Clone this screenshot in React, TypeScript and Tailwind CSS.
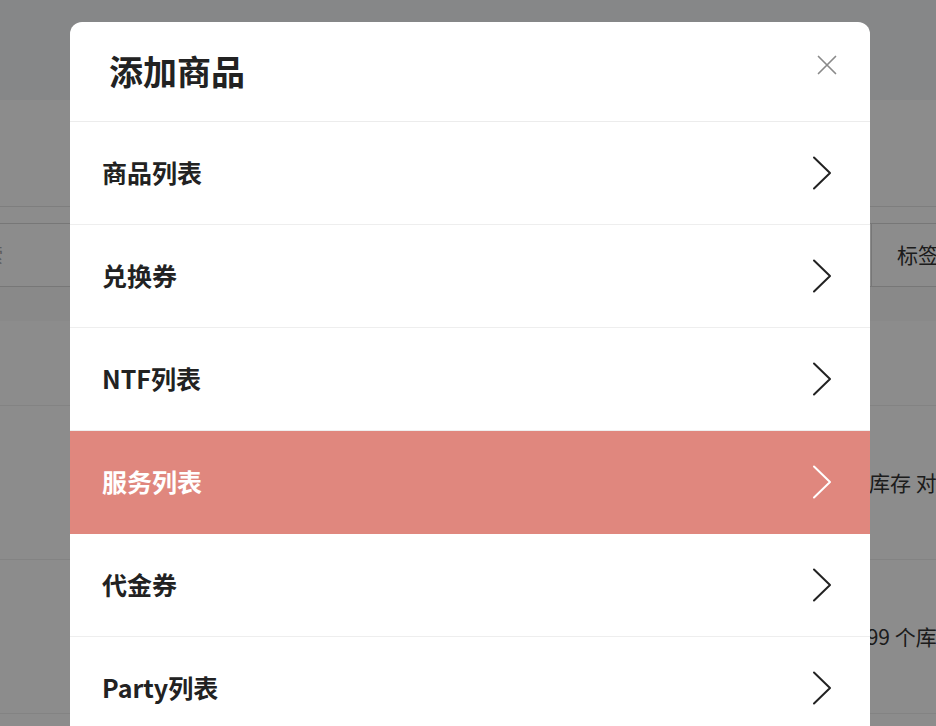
const items = ["商品列表", "兑换券", "NTF列表", "服务列表", "代金券", "Party列表"]
const active = "服务列表"

function Chevron({ light }: { light?: boolean }) {
  return (
    <svg width="20" height="34" viewBox="0 0 20 34" fill="none" className={light ? "text-white" : "text-[#222]"}>
      <path d="M2 1.5 L18 17 L2 32.5" stroke="currentColor" strokeWidth="2" strokeLinecap="round" strokeLinejoin="round" />
    </svg>
  )
}

function CloseIcon() {
  return (
    <svg width="20" height="20" viewBox="0 0 20 20" fill="none" className="text-[#8a8a8a]">
      <path d="M1.5 1.5 L18.5 18.5 M18.5 1.5 L1.5 18.5" stroke="currentColor" strokeWidth="1.7" strokeLinecap="round" />
    </svg>
  )
}

export default function App() {
  return (
    <div
      className="relative h-[726px] w-[936px] overflow-hidden bg-white"
      style={{ fontFamily: '"Noto Sans CJK SC", "Noto Sans", sans-serif' }}
    >
      {/* page behind the dialog */}
      <div className="flex flex-col text-[#333]">
        <div className="h-[100px] bg-[#f5f6f8]" />
        <div className="h-[107px] border-b border-[#e6e6e6]" />
        <div className="mt-[16px] flex h-[64px] border-y border-[#d9d9d9]">
          <div className="flex flex-1 items-center text-[20px] text-[#aaa]">
            <span className="ml-[-37px]">搜索</span>
          </div>
          <div className="flex w-[65px] items-center border-l border-[#d9d9d9] pl-[25px] text-[21px] whitespace-nowrap">
            标签
          </div>
        </div>
        <div className="h-[34px] bg-[#fafafa]" />
        <div className="h-[85px] border-b border-[#eee]" />
        <div className="flex h-[154px] items-center border-b border-[#eee] pl-[869px] text-[21px] whitespace-nowrap">
          库存 对
        </div>
        <div className="flex h-[154px] items-center border-b border-[#eee] pl-[855px] text-[21px] whitespace-nowrap">
          999 个库存
        </div>
      </div>

      {/* overlay */}
      <div className="absolute inset-0 bg-black/45" />

      {/* dialog */}
      <div className="absolute left-[70px] top-[22px] w-[800px] overflow-hidden rounded-t-[12px] bg-white">
        <div className="flex h-[100px] items-center justify-between border-b border-[#ececec] pl-[39px] pr-[33px]">
          <h2 className="pb-[2px] text-[34px] font-semibold text-[#222]">添加商品</h2>
          <div className="mb-[14px]">
            <CloseIcon />
          </div>
        </div>
        {items.map(item => {
          const on = item === active
          return (
            <div
              key={item}
              className={`flex h-[103px] items-center justify-between border-b pl-[32px] pr-[38px] ${
                on ? "border-[#e0877e] bg-[#e0877e]" : "border-[#eeeeee] bg-white"
              }`}
            >
              <span className={`text-[25px] font-semibold ${on ? "text-white" : "text-[#222]"}`}>{item}</span>
              <Chevron light={on} />
            </div>
          )
        })}
      </div>
    </div>
  )
}
